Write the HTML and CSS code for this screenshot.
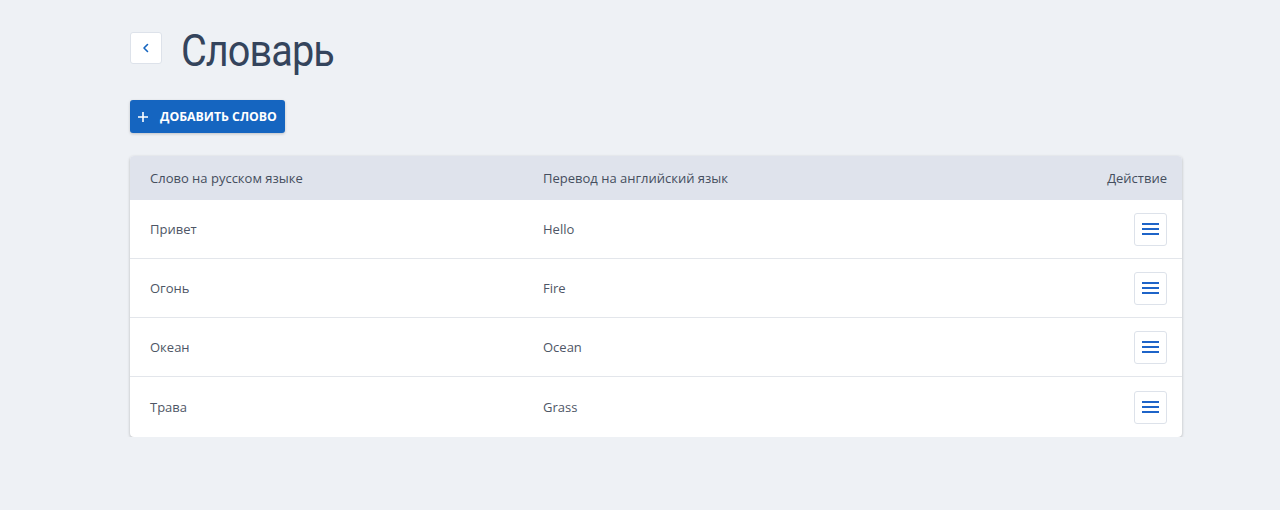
FILE: index.html
```html
<!DOCTYPE html>
<html lang="ru">
<head>
<meta charset="utf-8">
<title>Словарь</title>
<link rel="stylesheet" href="styles.css">
</head>
<body>
<div class="page">
  <div class="head">
    <button class="back" aria-label="Назад">
      <svg width="10" height="10" viewBox="0 0 10 10"><path d="M6.5 1.5 L3 5 L6.5 8.5" fill="none" stroke="#1565c0" stroke-width="1.6" stroke-linecap="round" stroke-linejoin="round"/></svg>
    </button>
    <h1 class="title">Словарь</h1>
  </div>
  <button class="add">
    <svg width="12" height="12" viewBox="0 0 12 12"><path d="M6 1V11M1 6H11" stroke="#fff" stroke-width="1.6"/></svg>
    <span>Добавить слово</span>
  </button>
  <div class="table">
    <div class="row header">
      <div class="c1">Слово на русском языке</div>
      <div class="c2">Перевод на английский язык</div>
      <div class="c3">Действие</div>
    </div>
    <div class="row">
      <div class="c1">Привет</div>
      <div class="c2">Hello</div>
      <div class="c3"><button class="menu" aria-label="Меню"><span></span><span></span><span></span></button></div>
    </div>
    <div class="row">
      <div class="c1">Огонь</div>
      <div class="c2">Fire</div>
      <div class="c3"><button class="menu" aria-label="Меню"><span></span><span></span><span></span></button></div>
    </div>
    <div class="row">
      <div class="c1">Океан</div>
      <div class="c2">Ocean</div>
      <div class="c3"><button class="menu" aria-label="Меню"><span></span><span></span><span></span></button></div>
    </div>
    <div class="row last">
      <div class="c1">Трава</div>
      <div class="c2">Grass</div>
      <div class="c3"><button class="menu" aria-label="Меню"><span></span><span></span><span></span></button></div>
    </div>
  </div>
</div>
</body>
</html>
```
FILE: styles.css
```css
html, body {
  margin: 0;
  padding: 0;
  background: #eef1f5;
  font-family: "Open Sans", "Liberation Sans", sans-serif;
}
.page {
  width: 1052px;
  margin-left: 130px;
  padding-top: 32px;
}
.head {
  display: flex;
  align-items: center;
  gap: 19px;
  height: 32px;
}
.back {
  width: 32px;
  height: 32px;
  box-sizing: border-box;
  background: #fff;
  border: 1px solid #dde2ea;
  border-radius: 3px;
  display: flex;
  align-items: center;
  justify-content: center;
  padding: 0;
}
.title {
  margin: 0;
  padding-top: 6px;
  font-family: Roboto, sans-serif;
  font-weight: 400;
  font-size: 44px;
  color: #34445c;
  letter-spacing: -1px;
  transform: scaleX(0.9);
  transform-origin: left center;
  line-height: 32px;
}
.add {
  margin-top: 36px;
  height: 33px;
  width: 155px;
  background: #1565c0;
  border: none;
  border-radius: 3px;
  box-shadow: 0 1px 3px rgba(0,0,0,0.2);
  display: flex;
  align-items: center;
  gap: 11px;
  padding: 0 0 0 7px;
  color: #fff;
  font-family: "Open Sans", sans-serif;
  font-weight: 700;
  font-size: 12.3px;
  text-transform: uppercase;
}
.table {
  margin-top: 23px;
  background: #fff;
  border-radius: 4px;
  box-shadow: 0 1px 3px rgba(0,0,0,0.25);
  overflow: hidden;
}
.row {
  display: flex;
  align-items: center;
  box-sizing: border-box;
  height: 59px;
  border-bottom: 1px solid #e3e6eb;
  font-size: 13px;
  color: #4e5666;
}
.row.last { border-bottom: none; height: 60px; }
.row.header {
  height: 44px;
  background: #dfe3ec;
  border-bottom: none;
  color: #454e5e;
}
.c1 { width: 393px; padding-left: 20px; }
.c2 { flex: 1; }
.c3 { padding-right: 15px; text-align: right; }
.menu {
  width: 33px;
  height: 33px;
  box-sizing: border-box;
  background: #fff;
  border: 1px solid #dde2ea;
  border-radius: 3px;
  padding: 0;
  display: flex;
  flex-direction: column;
  align-items: center;
  justify-content: center;
  gap: 3px;
}
.menu span {
  display: block;
  width: 17px;
  height: 2px;
  background: #1e64c8;
}
```
